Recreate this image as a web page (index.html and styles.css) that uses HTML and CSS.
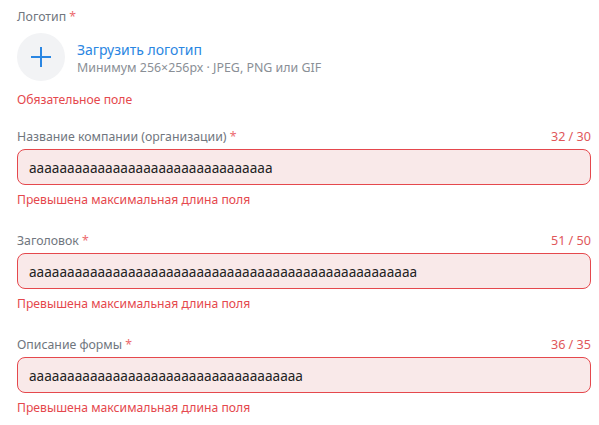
FILE: index.html
```html
<!DOCTYPE html>
<html lang="ru">
<head>
<meta charset="utf-8">
<link rel="stylesheet" href="styles.css">
</head>
<body>
<div class="form">
  <div class="section logo-section">
    <div class="label-row"><span class="label">Логотип <span class="req">*</span></span></div>
    <div class="upload">
      <div class="upload-circle">
        <svg width="20" height="20" viewBox="0 0 20 20"><path d="M10 0V20M0 10H20" stroke="#2a86e2" stroke-width="2"/></svg>
      </div>
      <div class="upload-text">
        <div class="upload-title">Загрузить логотип</div>
        <div class="upload-hint">Минимум 256×256px · JPEG, PNG или GIF</div>
      </div>
    </div>
    <div class="error error-logo">Обязательное поле</div>
  </div>

  <div class="section field">
    <div class="label-row"><span class="label">Название компании (организации) <span class="req">*</span></span><span class="counter">32 / 30</span></div>
    <div class="input">аааааааааааааааааааааааааааааааа</div>
    <div class="error">Превышена максимальная длина поля</div>
  </div>

  <div class="section field">
    <div class="label-row"><span class="label">Заголовок <span class="req">*</span></span><span class="counter">51 / 50</span></div>
    <div class="input">ааааааааааааааааааааааааааааааааааааааааааааааааааа</div>
    <div class="error">Превышена максимальная длина поля</div>
  </div>

  <div class="section field">
    <div class="label-row"><span class="label">Описание формы <span class="req">*</span></span><span class="counter">36 / 35</span></div>
    <div class="input">аааааааааааааааааааааааааааааааааааа</div>
    <div class="error">Превышена максимальная длина поля</div>
  </div>
</div>
</body>
</html>
```

FILE: styles.css
```css
* { box-sizing: border-box; }
html, body { margin: 0; padding: 0; background: #fff; }
body {
  font-family: "Noto Sans", "Open Sans", sans-serif;
  color: #222;
}
.form {
  padding: 9px 8px 0 17px;
  display: flex;
  flex-direction: column;
}
.label-row {
  display: flex;
  justify-content: space-between;
  align-items: center;
  height: 16px;
  line-height: 16px;
  font-size: 12.3px;
}
.label { color: #70767e; }
.req { color: #ec6a6e; }
.counter { color: #e0575a; font-size: 12.6px; }
.upload {
  display: flex;
  align-items: center;
  gap: 12px;
  margin-top: 8px;
  height: 48px;
}
.upload-circle {
  width: 48px;
  height: 48px;
  border-radius: 50%;
  background: #f2f3f5;
  display: flex;
  align-items: center;
  justify-content: center;
  flex-shrink: 0;
}
.upload-circle svg { display: block; }
.upload-text { display: flex; flex-direction: column; padding-top: 2px; }
.upload-title {
  color: #2a86e2;
  font-size: 14px;
  line-height: 20px;
}
.upload-hint {
  color: #8a8f96;
  font-size: 12.4px;
  line-height: 16px;
}
.error {
  color: #e5484d;
  font-size: 12.2px;
  line-height: 16px;
  margin-top: 7px;
}
.error-logo { margin-top: 11px; }
.field { margin-top: 21px; }
.field + .field { margin-top: 25px; }
.input {
  margin-top: 4px;
  height: 36px;
  border: 1px solid #e5484d;
  border-radius: 8px;
  background: #f9e9e9;
  padding: 0 11px;
  display: flex;
  align-items: center;
  font-size: 13.7px;
  color: #222;
}
```
